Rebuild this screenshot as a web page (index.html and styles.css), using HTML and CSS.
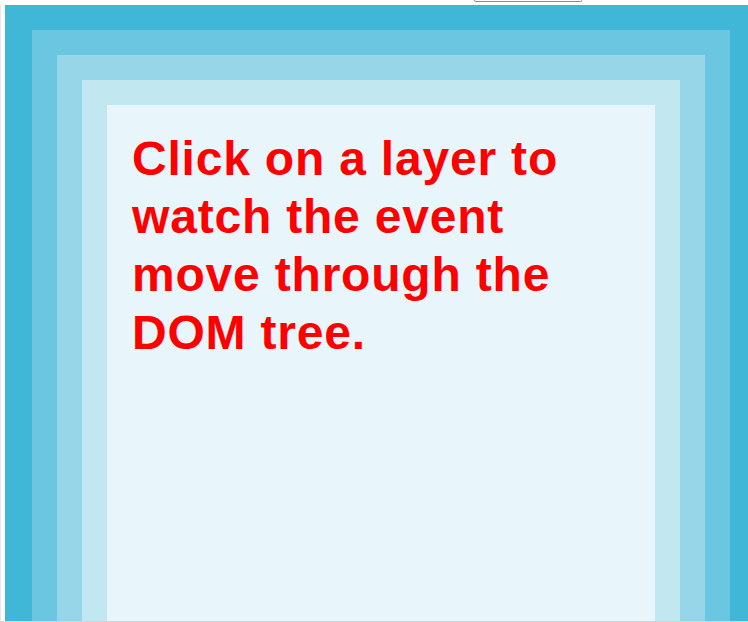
FILE: index.html
```html
<!DOCTYPE html>
<html lang="en">
<head>
<meta charset="utf-8">
<title>Event bubbling layers</title>
<link rel="stylesheet" href="styles.css">
</head>
<body>
<div class="topbar"><div class="btn-edge"></div></div>
<div class="stage">
  <div class="layer l1">
    <div class="layer l2">
      <div class="layer l3">
        <div class="layer l4">
          <div class="layer l5">
            <p class="msg">Click on a layer to watch the event move through the DOM tree.</p>
          </div>
        </div>
      </div>
    </div>
  </div>
</div>
</body>
</html>
```

FILE: styles.css
```css
html, body {
  margin: 0;
  padding: 0;
  background: #ffffff;
  overflow: hidden;
}

body {
  width: 748px;
  height: 622px;
  font-family: "Liberation Sans", Arial, sans-serif;
}

.topbar {
  height: 5px;
}

.btn-edge {
  margin-left: 474px;
  width: 106px;
  height: 1px;
  border: 1px solid #8a8a8a;
  border-top: 0;
  border-radius: 0 0 3px 3px;
}

.stage {
  display: flex;
  height: 617px;
  padding-left: 4px;
  border-left: 1px solid #e4e8ea;
  border-bottom: 1px solid #cdd5d8;
  overflow: hidden;
  box-sizing: border-box;
  width: 748px;
}

.layer {
  padding: 25px;
  box-sizing: border-box;
}

.l1 {
  flex: none;
  width: 750px;
  padding-left: 27px;
  background: #41b7d8;
}

.l2 { background: #6bc6e1; }
.l3 { background: #96d6e8; }
.l4 { background: #c1e7f1; }

.l5 {
  background: #e8f6fb;
  min-height: 700px;
}

.msg {
  margin: 0;
  color: #ff0000;
  font-size: 48px;
  font-weight: bold;
  line-height: 58px;
  letter-spacing: 0.8px;
}
```
